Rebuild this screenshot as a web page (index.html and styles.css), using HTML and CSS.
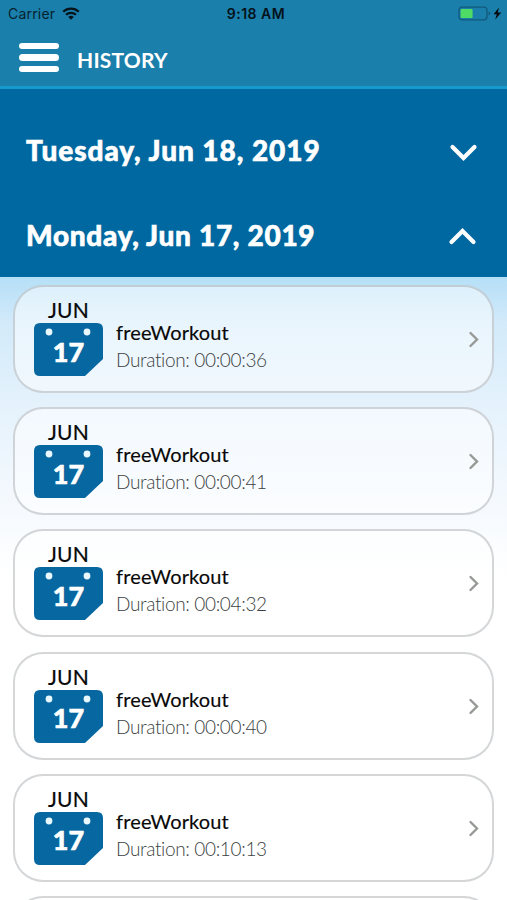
FILE: index.html
```
<!DOCTYPE html>
<html lang="en">
<head>
  <meta charset="UTF-8">
  <title>History</title>
  <meta name="viewport" content="width=device-width, initial-scale=1.0">
  <link rel="stylesheet" href="styles.css">
</head>
<body>
  <header class="header">
    <div class="status-bar">
      <div class="carrier">
        <span>Carrier</span>
        <svg class="wifi" width="18" height="13" viewBox="0 0 18 13">
          <path d="M1.2 4.8a11.2 11.2 0 0 1 15.6 0M4 7.8a7.2 7.2 0 0 1 10 0" fill="none" stroke="#06141c" stroke-width="2.2"/>
          <path d="M6.2 10a4.2 4.2 0 0 1 5.6 0L9 12.8z" fill="#06141c"/>
        </svg>
      </div>
      <span class="time">9:18 AM</span>
      <svg class="battery" width="44" height="16" viewBox="0 0 44 16">
        <rect x="1" y="1.2" width="28" height="12.6" rx="3" fill="none" stroke="#12597c" stroke-width="1.3"/>
        <rect x="2.6" y="3" width="12" height="9" rx="1" fill="#4fdc64"/>
        <path d="M30.6 5.5v4q1.6-.6 1.6-2t-1.6-2z" fill="#12597c"/>
        <path d="M41 1.4 35.6 8.2h3.2L37.2 13.5l6-7h-3.5z" fill="#04090c"/>
      </svg>
    </div>
    <div class="nav-bar">
      <div class="menu"><i></i><i></i><i></i></div>
      <h1>HISTORY</h1>
    </div>
  </header>

  <section class="days">
    <div class="day">
      <h2>Tuesday, Jun 18, 2019</h2>
      <svg width="30" height="20" viewBox="0 0 30 20"><path d="M4.5 5 15.5 16 26.5 5"/></svg>
    </div>
    <div class="day monday">
      <h2>Monday, Jun 17, 2019</h2>
      <svg width="30" height="20" viewBox="0 0 30 20"><path d="M3.5 15 14.5 4 25.5 15"/></svg>
    </div>
  </section>

  <main class="list" id="list"></main>

  <script>
    const durations = ['00:00:36', '00:00:41', '00:04:32', '00:00:40', '00:10:13'];

    const cards = durations.map(duration => `
      <div class="card">
        <div class="date">
          <span class="month">JUN</span>
          <div class="calendar">
            <svg width="69" height="53" viewBox="0 0 69 53">
              <path d="M6 0h57q6 0 6 6v30L51 53H6q-6 0-6-6V6q0-6 6-6z" fill="#0767a0"/>
              <circle cx="15" cy="9" r="3.4" fill="#e9f7ff"/>
              <circle cx="53" cy="9" r="3.4" fill="#e9f7ff"/>
            </svg>
            <span class="number">17</span>
          </div>
        </div>
        <div class="info">
          <div class="name">freeWorkout</div>
          <div class="duration">Duration: ${duration}</div>
        </div>
        <svg class="arrow" width="12" height="18" viewBox="0 0 12 18"><path d="M3.5 3 10 9.5 3.5 16"/></svg>
      </div>
    `).join('');

    // empty card closes the list
    document.getElementById('list').innerHTML = cards + '<div class="card"></div>';
  </script>
</body>
</html>
```

FILE: styles.css
```
* { box-sizing: border-box; }
body { margin: 0; height: 900px; overflow: hidden; font-family: Lato, sans-serif; background: #fff; display: flex; flex-direction: column; }
h1, h2 { margin: 0; white-space: nowrap; }
svg { display: block; flex-shrink: 0; }

.header { height: 89px; flex-shrink: 0; background: #1b7fab; border-bottom: 3px solid #1599cf; color: #fff; }
.status-bar { height: 27px; padding: 0 5px 0 8px; display: grid; grid-template-columns: 1fr auto 1fr; align-items: center; font-family: Inter, sans-serif; font-size: 14px; color: #06222f; }
.carrier { display: flex; align-items: center; gap: 7px; letter-spacing: 0.2px; }
.time { font-weight: 600; color: #04121a; letter-spacing: 0.5px; padding-left: 2px; }
.battery { justify-self: end; }
.nav-bar { height: 59px; padding: 2px 19px 0; display: flex; align-items: center; gap: 18px; }
.menu { width: 40px; display: flex; flex-direction: column; gap: 5px; }
.menu i { height: 6.2px; border-radius: 4px; background: #fff; }
h1 { font-size: 21px; font-weight: 700; letter-spacing: 0.2px; padding-top: 3px; }

.days { height: 188px; flex-shrink: 0; padding: 18px 29px 0 26px; background: #0068a0; color: #fff; }
.day { height: 85px; display: flex; align-items: center; justify-content: space-between; }
.day h2 { font-size: 28px; font-weight: 900; letter-spacing: 0.95px; -webkit-text-stroke: 0.6px #fff; }
.day.monday h2 { letter-spacing: 0.7px; }
.day svg { margin-top: 4px; }
.day path { fill: none; stroke: #fff; stroke-width: 4.2; stroke-linecap: round; }

.list { flex: 1; min-height: 0; overflow: hidden; padding: 8px 13px 0; display: flex; flex-direction: column; gap: 14.2px; background: linear-gradient(#b5dff7 0, #d2eafa 45px, #e5f2fc 130px, #f4f9fe 220px, #fff 300px); }
.card { height: 108px; flex-shrink: 0; padding: 0 13px 0 19px; display: flex; align-items: center; border: 2px solid rgba(160, 165, 168, 0.45); border-radius: 30px; background: rgba(255, 255, 255, 0.5); }
.date { width: 69px; margin-top: -4px; display: flex; flex-direction: column; align-items: center; }
.month { font-size: 21px; line-height: 24px; color: #080808; -webkit-text-stroke: 0.2px #080808; letter-spacing: 0.2px; padding-bottom: 1px; }
.calendar { display: grid; place-items: center; }
.calendar > * { grid-area: 1 / 1; }
.number { padding-top: 4px; font-size: 27px; font-weight: 900; line-height: 32px; color: #fff; -webkit-text-stroke: 0.6px #fff; }
.info { flex: 1; padding: 14px 0 0 13px; line-height: 28px; }
.name { font-size: 20px; color: #080808; -webkit-text-stroke: 0.15px #080808; letter-spacing: 0.15px; }
.duration { font-size: 19px; font-weight: 300; color: #3c3f42; letter-spacing: -0.35px; }
.arrow path { fill: none; stroke: #969995; stroke-width: 2.4; stroke-linecap: round; }
```
